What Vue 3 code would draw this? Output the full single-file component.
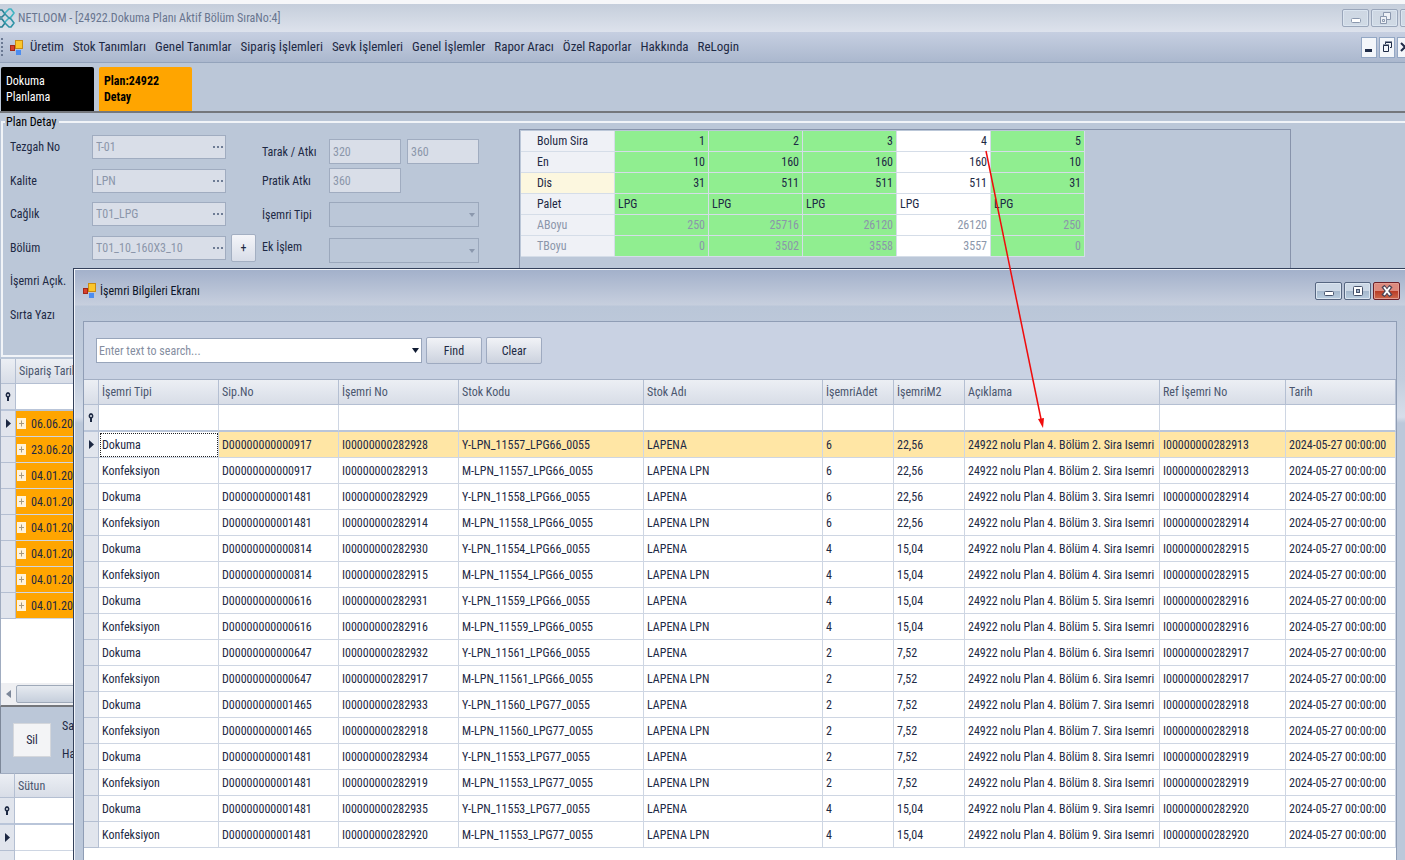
<script setup>
const menu = ['Üretim', 'Stok Tanımları', 'Genel Tanımlar', 'Sipariş İşlemleri', 'Sevk İşlemleri', 'Genel İşlemler', 'Rapor Aracı', 'Özel Raporlar', 'Hakkında', 'ReLogin']

const fields = [
  { id: 'tezgah', label: 'Tezgah No', value: 'T-01' },
  { id: 'kalite', label: 'Kalite', value: 'LPN' },
  { id: 'caglik', label: 'Cağlık', value: 'T01_LPG' },
  { id: 'bolum', label: 'Bölüm', value: 'T01_10_160X3_10', add: true },
  { id: 'acik', label: 'İşemri Açık.', value: '', wide: true },
  { id: 'sirta', label: 'Sırta Yazı', value: '', wide: true },
]

const sections = [
  { label: 'Bolum Sira', cells: ['1', '2', '3', '4', '5'] },
  { label: 'En', cells: ['10', '160', '160', '160', '10'] },
  { label: 'Dis', cells: ['31', '511', '511', '511', '31'], current: true },
  { label: 'Palet', cells: ['LPG', 'LPG', 'LPG', 'LPG', 'LPG'], text: true },
  { label: 'ABoyu', cells: ['250', '25716', '26120', '26120', '250'], dim: true },
  { label: 'TBoyu', cells: ['0', '3502', '3558', '3557', '0'], dim: true },
]

const dates = ['06.06.20', '23.06.20', '04.01.20', '04.01.20', '04.01.20', '04.01.20', '04.01.20', '04.01.20']

const columns = ['İşemri Tipi', 'Sip.No', 'İşemri No', 'Stok Kodu', 'Stok Adı', 'İşemriAdet', 'İşemriM2', 'Açıklama', 'Ref İşemri No', 'Tarih']

const orders = [
  ['0917', '11557_LPG66', '6', '22,56'],
  ['1481', '11558_LPG66', '6', '22,56'],
  ['0814', '11554_LPG66', '4', '15,04'],
  ['0616', '11559_LPG66', '4', '15,04'],
  ['0647', '11561_LPG66', '2', '7,52'],
  ['1465', '11560_LPG77', '2', '7,52'],
  ['1481', '11553_LPG77', '2', '7,52'],
  ['1481', '11553_LPG77', '4', '15,04'],
]

const rows = orders.flatMap(([order, stock, count, area], i) => {
  const ref = `I00000000${282913 + i}`
  const tail = [count, area, `24922 nolu Plan 4. Bölüm ${i + 2}. Sira Isemri`, ref, '2024-05-27 00:00:00']
  const no = `D0000000000${order}`
  return [
    ['Dokuma', no, `I00000000${282928 + i}`, `Y-LPN_${stock}_0055`, 'LAPENA', ...tail],
    ['Konfeksiyon', no, ref, `M-LPN_${stock}_0055`, 'LAPENA LPN', ...tail],
  ]
})
</script>

<template>
  <div class="app">
    <header class="titlebar">
      <svg class="logo" width="15" height="20" viewBox="0 0 15 20" fill="none" stroke-width="1.600" stroke-linecap="round" stroke-linejoin="round">
        <path d="M0 2l2 0 3 4-3 3-2 0M0 11l2 0 3 4-3 4-2 0" stroke="#2a7f93" />
        <path d="M5 5l4-4 2 0 3 4-3 4-2 1-4 4" stroke="#3fb3c2" />
        <path d="M5 6l4 4 2 1 3 4-3 4-2 0-4-4" stroke="#2f93a6" />
      </svg>
      <h1>NETLOOM - [24922.Dokuma Planı Aktif Bölüm SıraNo:4]</h1>
      <div class="winbtns faded">
        <button aria-label="Minimize"><svg width="12" height="12" viewBox="0 0 12 12"><rect x="1.500" y="6.500" width="9" height="4" rx="1" fill="#fff" stroke="#8b98ae" /></svg></button>
        <button aria-label="Restore"><svg width="12" height="14" viewBox="0 0 12 14" fill="#eef1f6" stroke="#8b98ae"><path d="M4.500 1.500h7v7h-7z" /><path d="M1.500 5.500h6v7h-6z" /><path d="M3.500 8.500h2v2h-2z" /></svg></button>
        <button aria-label="Close"></button>
      </div>
    </header>

    <nav class="menubar">
      <span class="grip"></span>
      <svg class="appicon" width="13" height="15" viewBox="0 0 13 15">
        <rect x="5.500" y=".5" width="7" height="8" fill="#fbc62c" stroke="#c98b12" />
        <rect x=".5" y="5.500" width="4" height="5" fill="#d8402c" stroke="#a32818" />
        <rect x="6" y="10" width="5" height="5" fill="#4d8df0" />
      </svg>
      <a v-for="m in menu" :key="m" href="#">{{ m }}</a>
      <div class="mdibtns">
        <button aria-label="Minimize window"><svg width="12" height="14" viewBox="0 0 12 14"><path d="M2 9h7v3H2z" fill="#1f2c48" /></svg></button>
        <button aria-label="Restore window"><svg width="12" height="14" viewBox="0 0 12 14" fill="none" stroke="#1f2c48"><path d="M4.500 4V2.500h6v5H9M4 2h7" /><path d="M2.500 5.500h5v6h-5zM2 5h6" /></svg></button>
        <button aria-label="Close window"><svg width="12" height="14" viewBox="0 0 12 14"><path d="M2 3l8 8M10 3l-8 8" stroke="#1f2c48" stroke-width="2" /></svg></button>
      </div>
    </nav>

    <div class="tabs">
      <button class="tab dark">Dokuma<br>Planlama</button>
      <button class="tab active">Plan:24922<br>Detay</button>
    </div>

    <main>
      <fieldset class="detail">
        <legend>Plan Detay</legend>
        <div class="detail-body">
          <div class="fields">
            <div v-for="f in fields" :key="f.id" class="field">
              <label :for="f.id">{{ f.label }}</label>
              <span class="editor" :class="{ wide: f.wide }">
                <input :id="f.id" :value="f.value" disabled>
                <svg v-if="!f.wide" width="11" height="2" viewBox="0 0 11 2" fill="#6d7b94"><path d="M0 0h2v2H0zM4 0h2v2H4zM8 0h2v2H8z" /></svg>
              </span>
              <button v-if="f.add" class="add" aria-label="Ekle">+</button>
            </div>
          </div>

          <div class="extras">
            <label for="tarak">Tarak / Atkı</label>
            <div class="pair">
              <input id="tarak" value="320" disabled>
              <input value="360" aria-label="Atkı" disabled>
            </div>
            <label for="pratik">Pratik Atkı</label>
            <div class="pair"><input id="pratik" value="360" disabled></div>
            <label for="tip" class="lower">İşemri Tipi</label>
            <div class="drop"><select id="tip" disabled></select></div>
            <label for="ek">Ek İşlem</label>
            <div class="drop"><select id="ek" disabled></select></div>
          </div>

          <div class="sections">
            <table>
              <tbody>
                <tr v-for="s in sections" :key="s.label" :class="{ dim: s.dim, text: s.text, current: s.current }">
                  <th scope="row">{{ s.label }}</th>
                  <td v-for="(c, i) in s.cells" :key="i" :class="{ selected: i === 3 }">{{ c }}</td>
                </tr>
              </tbody>
            </table>
          </div>
        </div>
      </fieldset>

      <section class="orders">
        <table class="grid">
          <colgroup><col class="c-ind"><col></colgroup>
          <thead>
            <tr><th></th><th>Sipariş Tarih</th></tr>
          </thead>
          <tbody>
            <tr class="filter">
              <th><svg width="6" height="9" viewBox="0 0 6 9"><path d="M3 0a3 3 0 0 1 1 5.500V9H2V5.500A3 3 0 0 1 3 0z" fill="#1c2842" /><circle cx="3" cy="3" r="1" fill="#e1e5ed" /></svg></th>
              <td></td>
            </tr>
            <tr v-for="(d, i) in dates" :key="i" class="hot">
              <th><svg v-if="i === 0" width="5" height="9" viewBox="0 0 5 9"><path d="M0 0l5 4.500L0 9z" fill="#1c2842" /></svg></th>
              <td>
                <div class="date">
                  <button class="expand" aria-label="Genişlet"><svg width="9" height="11" viewBox="0 0 9 11"><path d="M4.500 2.500v6M2 5.500h5" stroke="#a59a80" /></svg></button>
                  <span>{{ d }}</span>
                </div>
              </td>
            </tr>
          </tbody>
        </table>
        <div class="scroll">
          <svg width="5" height="8" viewBox="0 0 5 8"><path d="M5 0L0 4l5 4z" fill="#7c8799" /></svg>
          <span class="thumb"></span>
        </div>
      </section>

      <section class="actions">
        <button>Sil</button>
        <div><span>Sa</span><span>Ha</span></div>
      </section>

      <table class="grid lines">
        <colgroup><col class="c-ind"><col></colgroup>
        <thead>
          <tr><th></th><th>Sütun</th></tr>
        </thead>
        <tbody>
          <tr class="filter">
            <th><svg width="6" height="9" viewBox="0 0 6 9"><path d="M3 0a3 3 0 0 1 1 5.500V9H2V5.500A3 3 0 0 1 3 0z" fill="#1c2842" /><circle cx="3" cy="3" r="1" fill="#e1e5ed" /></svg></th>
            <td></td>
          </tr>
          <tr>
            <th><svg width="5" height="9" viewBox="0 0 5 9"><path d="M0 0l5 4.500L0 9z" fill="#1c2842" /></svg></th>
            <td></td>
          </tr>
          <tr><th></th><td></td></tr>
        </tbody>
      </table>
    </main>

    <section class="dialog" role="dialog" aria-labelledby="dialog-title">
      <header>
        <svg width="13" height="15" viewBox="0 0 13 15">
          <rect x="5.500" y=".5" width="7" height="8" fill="#fbc62c" stroke="#c98b12" />
          <rect x=".5" y="5.500" width="4" height="5" fill="#d8402c" stroke="#a32818" />
          <rect x="6" y="10" width="5" height="5" fill="#4d8df0" />
        </svg>
        <h2 id="dialog-title">İşemri Bilgileri Ekranı</h2>
        <div class="winbtns">
          <button aria-label="Minimize"><svg width="12" height="12" viewBox="0 0 12 12"><rect x="1.500" y="6.500" width="9" height="4" rx="1" fill="#fff" stroke="#46536c" /></svg></button>
          <button aria-label="Maximize"><svg width="12" height="12" viewBox="0 0 12 12" fill="#fff" stroke="#46536c"><rect x="1.500" y="1.500" width="9" height="9" rx="1" /><rect x="4.500" y="4.500" width="3" height="3" fill="#9fb0c8" /></svg></button>
          <button class="close" aria-label="Close"><svg width="12" height="12" viewBox="0 0 12 12"><path d="M2 1l8 10M10 1l-8 10" stroke="#4a4456" stroke-width="4" /><path d="M3 2l6 8M9 2l-6 8" stroke="#fff" stroke-width="2" /></svg></button>
        </div>
      </header>

      <div class="panel">
        <form class="search" @submit.prevent>
          <div class="combo">
            <input placeholder="Enter text to search..." aria-label="Search">
            <button type="button" aria-label="History"><svg width="7" height="5" viewBox="0 0 7 5"><path d="M0 0h7L3.500 5z" fill="#111c33" /></svg></button>
          </div>
          <button>Find</button>
          <button type="button">Clear</button>
        </form>

        <table class="grid jobs">
          <colgroup>
            <col class="c-ind"><col class="c-type"><col class="c-sip"><col class="c-sip"><col class="c-code"><col class="c-name">
            <col class="c-count"><col class="c-count"><col class="c-note"><col class="c-ref"><col>
          </colgroup>
          <thead>
            <tr><th></th><th v-for="c in columns" :key="c">{{ c }}</th></tr>
          </thead>
          <tbody>
            <tr class="filter">
              <th><svg width="6" height="9" viewBox="0 0 6 9"><path d="M3 0a3 3 0 0 1 1 5.500V9H2V5.500A3 3 0 0 1 3 0z" fill="#1c2842" /><circle cx="3" cy="3" r="1" fill="#e1e5ed" /></svg></th>
              <td v-for="c in columns" :key="c"></td>
            </tr>
            <tr v-for="(r, i) in rows" :key="i" :class="{ focused: i === 0 }">
              <th><svg v-if="i === 0" width="5" height="9" viewBox="0 0 5 9"><path d="M0 0l5 4.500L0 9z" fill="#1c2842" /></svg></th>
              <td v-for="(c, j) in r" :key="j">{{ c }}</td>
            </tr>
          </tbody>
        </table>
      </div>
    </section>

    <svg class="arrow" width="64" height="280" viewBox="0 0 64 280">
      <path d="M1 1l55 268" stroke="#f00c0c" stroke-width="1.500" />
      <path d="M58 278l-5-9 6-1z" fill="#f00c0c" />
    </svg>
  </div>
</template>

<style>
body {
  background: #bbc7d8;
}
</style>

<style scoped>
.app {
  position: relative;
  height: 100vh;
  overflow: hidden;
  box-sizing: border-box;
  border-top: 4px solid #f6f7f9;
  background: #bbc7d8;
  color: #1d2944;
  font: 12px/16px "Roboto Condensed", Roboto, sans-serif;
}
.app * {
  box-sizing: border-box;
}
button, input, select {
  margin: 0;
  padding: 0;
  border: 0;
  border-radius: 0;
  background: none;
  font: inherit;
  color: inherit;
}
svg {
  display: block;
  flex: none;
}
h1, h2 {
  margin: 0;
  font: inherit;
}

.titlebar {
  display: flex;
  align-items: center;
  height: 28px;
  background: linear-gradient(#c5cedb, #dde2ec);
  color: #68758f;
}
.titlebar h1 {
  margin-left: 3px;
  flex: 1;
}
.winbtns {
  display: flex;
  gap: 2px;
}
.winbtns button {
  display: grid;
  place-items: center;
  width: 27px;
  height: 18px;
  border: 1px solid #566681;
  border-radius: 2px;
  box-shadow: inset 0 0 0 1px #dbe5f0;
  background: linear-gradient(#ccd8e6 50%, #a4b7cc 50%, #b9cde0);
}
.winbtns.faded {
  margin-right: -22px;
}
.winbtns.faded button {
  border-color: #9aa6ba;
  background: linear-gradient(#ced7e3, #d0dae5);
}
.winbtns .close {
  border-color: #6b2029;
  box-shadow: inset 0 0 0 1px #e39c90;
  background: linear-gradient(#dc8a7e 50%, #b93a24 50%, #cc6a4e);
}

.menubar {
  display: flex;
  align-items: center;
  gap: 9px;
  height: 31px;
  padding-left: 1px;
  border-bottom: 1px solid #93a3bb;
  background: linear-gradient(#c6cfe1, #abb8ce);
  font-size: 13px;
}
.menubar a {
  color: inherit;
  text-decoration: none;
  white-space: nowrap;
}
.grip {
  height: 18px;
  margin-right: -2px;
  border-left: 2px dotted #6a7892;
}
.appicon {
  margin-right: -2px;
}
.mdibtns {
  display: flex;
  gap: 2px;
  margin: 0 -8px 0 auto;
}
.mdibtns button {
  display: grid;
  place-items: center;
  width: 16px;
  height: 21px;
  border: 1px solid #93a7c4;
  background: #f3f6fa;
}

.tabs {
  display: flex;
  gap: 5px;
  height: 50px;
  padding: 4px 1px 0;
  border-bottom: 2px solid #74777c;
}
.tab {
  width: 93px;
  height: 44px;
  padding: 0 5px;
  border-radius: 2px 2px 0 0;
  text-align: left;
}
.dark {
  background: #000;
  color: #fff;
}
.active {
  background: #ffa500;
  color: #000;
  font-weight: bold;
}

.detail {
  height: 243px;
  min-width: 0;
  margin: 1px -4px 2px 1px;
  padding: 0;
  border: 2px solid #f1f4f8;
}
.detail legend {
  margin-left: 2px;
  padding: 0 3px 0 1px;
  color: #000;
}
.detail-body {
  display: flex;
  align-items: flex-start;
}
.fields {
  display: flex;
  flex-direction: column;
  justify-content: space-between;
  width: 253px;
  height: 192px;
  margin: 5px 0 0 7px;
}
.field {
  display: flex;
  align-items: center;
  height: 24px;
}
.field label {
  width: 82px;
}
.editor {
  display: flex;
  align-items: center;
  width: 134px;
  height: 24px;
  padding-right: 1px;
  border: 1px solid #a0acc0;
  background: #d9dee8;
  color: #8b96aa;
}
.editor.wide {
  width: 147px;
}
.editor input {
  flex: 1;
  min-width: 0;
  padding: 0 3px;
}
.add {
  width: 25px;
  height: 28px;
  margin-left: 5px;
  border: 1px solid #a3afc2;
  border-radius: 2px;
  background: linear-gradient(#f4f5f9, #d8dde8);
}
.extras {
  display: grid;
  grid-template-columns: 67px 150px;
  grid-template-rows: 25px 25px 30px 32px;
  row-gap: 4px;
  align-items: center;
  width: 217px;
  margin: 9px 40px 0 -1px;
}
.extras .lower {
  padding-top: 5px;
}
.pair {
  display: flex;
  gap: 6px;
}
.pair input {
  width: 72px;
  height: 25px;
  padding: 0 3px;
  border: 1px solid #a0acc0;
  background: #d9dee8;
  color: #8b96aa;
}
.drop {
  position: relative;
  align-self: end;
}
.drop::after {
  content: "";
  position: absolute;
  right: 4px;
  top: 11px;
  border: 3px solid transparent;
  border-top: 4px solid #8b98ad;
}
.drop select {
  display: block;
  width: 150px;
  height: 25px;
  border: 1px solid #9ba8bc;
  appearance: none;
  opacity: 1;
}
.sections {
  flex: 0 0 55%;
  height: 190px;
  margin-top: -1px;
  border: 1px solid #8793ab;
  padding: 1px;
}
.sections table {
  border-spacing: 0;
  table-layout: fixed;
  width: 564px;
}
.sections th, .sections td {
  height: 21px;
  padding: 0 3px;
  border: solid #d5dde8;
  border-width: 0 1px 1px 0;
  background: #90ee90;
  font-weight: normal;
  line-height: 20px;
  text-align: right;
}
.sections th {
  padding-left: 16px;
  background: #eff1f6;
  text-align: left;
}
.sections .current th {
  background: #fcf7df;
}
.sections .text td {
  text-align: left;
}
.sections .selected {
  background: #fff;
}
.sections .dim > * {
  color: #8b96aa;
}

.grid {
  width: 100%;
  border-spacing: 0;
  table-layout: fixed;
}
.grid th, .grid td {
  height: 26px;
  padding: 0 3px;
  border: solid #ced6e3;
  border-width: 0 1px 1px 0;
  font-weight: normal;
  text-align: left;
  white-space: nowrap;
  overflow: hidden;
}
.grid td {
  background: #fff;
}
.grid thead th {
  height: 25px;
  border-color: #b4bfd2;
  background: linear-gradient(#eceff4, #d8dde7);
  color: #4a566e;
}
.grid tbody th {
  border-color: #b4bfd2;
  background: #e1e5ed;
}
.grid tbody th svg {
  margin: 0 auto;
}
.grid .filter > * {
  height: 27px;
  border-bottom: 2px solid #b9c5d9;
}
.c-ind { width: 15px; }
.c-type, .c-sip { width: 120px; }
.c-code { width: 185px; }
.c-name { width: 179px; }
.c-count { width: 71px; }
.c-note { width: 195px; }
.c-ref { width: 126px; }

.orders {
  height: 348px;
  display: flex;
  flex-direction: column;
  justify-content: space-between;
  border-left: 1px solid #a0acc0;
  border-bottom: 2px solid #74777c;
  background: #fff;
}
.hot td {
  background: #ffa500;
}
.date {
  display: flex;
  align-items: center;
  gap: 5px;
  margin-left: -2px;
}
.expand {
  background: #fff3da;
}
.scroll {
  display: flex;
  align-items: center;
  gap: 5px;
  height: 22px;
  padding-left: 5px;
  background: #eeeff2;
}
.thumb {
  flex: 1;
  height: 18px;
  border: 1px solid #9ea9b9;
  border-radius: 2px;
  background: linear-gradient(#e6eaf0, #c6cfdc);
}
.actions {
  display: flex;
  align-items: center;
  gap: 11px;
  height: 66px;
  padding-left: 12px;
  border-left: 1px solid #7d8899;
}
.actions button {
  width: 38px;
  height: 34px;
  border: 1px solid #d4d7dc;
  background: #f3f4f6;
}
.actions div {
  display: grid;
  gap: 12px;
}
.lines thead th {
  border-top: 1px solid #a0acc0;
}

.dialog {
  position: absolute;
  inset: 264px -1px 0 73px;
  display: flex;
  flex-direction: column;
  padding: 0 8px 0 9px;
  border: 1px solid #33405a;
  border-bottom: 0;
  box-shadow: inset 1px 1px #f2f5fa;
  background: linear-gradient(#a2b0ca, #c7cfde 36px, #bac6d8 37px, #c3cede 110px, #d7deea 148px, #bcc8da 154px);
}
.dialog header {
  display: flex;
  align-items: center;
  gap: 4px;
  height: 43px;
  margin-right: -3px;
  color: #0c1529;
}
.dialog h2 {
  flex: 1;
}
.panel {
  flex: 1;
  min-height: 0;
  margin-top: 9px;
  border: solid #8f9db5;
  border-width: 1px 1px 0;
  background: #fff;
  overflow: hidden;
}
.search {
  display: flex;
  align-items: center;
  gap: 4px;
  height: 58px;
  padding-left: 12px;
  border-bottom: 1px solid #a3afc4;
  background: #c9d2e3;
}
.combo {
  display: flex;
  align-items: center;
  width: 326px;
  height: 25px;
  border: 1px solid #98a5bb;
  background: #fff;
}
.combo input {
  flex: 1;
  min-width: 0;
  padding: 0 2px;
}
.combo input::placeholder {
  color: #858e9f;
}
.combo button {
  padding: 0 2px;
}
.search > button {
  width: 56px;
  height: 27px;
  border: 1px solid #9eaac0;
  border-radius: 2px;
  background: linear-gradient(#f1f3f7, #ccd2de);
}
.focused td {
  background: #ffe6a5;
}
.focused th + td {
  outline: 1px dotted #222;
  outline-offset: -2px;
  background: #fff;
}
.arrow {
  position: absolute;
  left: 985px;
  top: 146px;
}
</style>
